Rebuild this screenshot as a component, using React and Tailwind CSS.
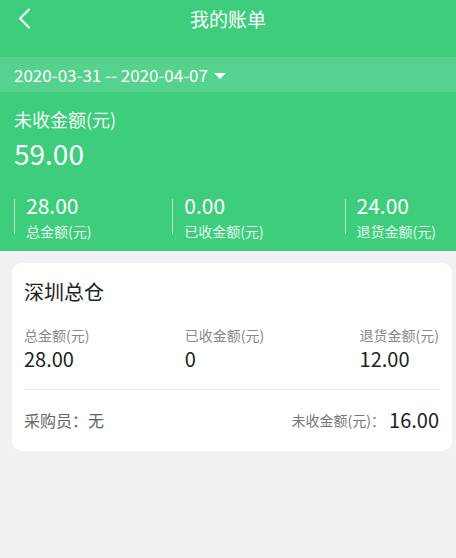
import React from "react";

const font = { fontFamily: '"Noto Sans CJK SC", "Noto Sans", sans-serif' };

// Kopfzeile: Summen im grünen Bereich
function HeadStat({ value, label }) {
  return (
    <div className="flex items-center">
      <div className="w-px h-[35px] bg-white/60" />
      <div className="ml-[11px]">
        <div className="text-[21px] leading-[26px] text-white">{value}</div>
        <div className="mt-[3px] text-[14px] leading-[20px] text-white/85">{label}</div>
      </div>
    </div>
  );
}

// Summen innerhalb der Lagerkarte
function CardStat({ label, value, right }) {
  return (
    <div className={right ? "text-left" : ""}>
      <div className="text-[14px] leading-[20px] text-[#888]">{label}</div>
      <div className="mt-px text-[20px] leading-[26px] text-[#222]">{value}</div>
    </div>
  );
}

export default function App() {
  const card = {
    name: "深圳总仓",
    total: "28.00",
    received: "0",
    returned: "12.00",
    buyer: "无",
    open: "16.00",
  };

  return (
    <div className="w-[456px] h-[558px] bg-[#f0f0f5] overflow-hidden" style={font}>
      {/* Grüner Kopfbereich */}
      <div className="bg-[#3ecd7c] pb-[10px]">
        <div className="relative h-[38px] flex items-center justify-center">
          <svg
            className="absolute left-[17px] top-[8px]"
            width="16"
            height="21"
            viewBox="0 0 16 21"
            fill="none"
          >
            <polyline points="12,1.5 3,10.5 12,19.5" stroke="white" strokeWidth="2" strokeLinecap="round" strokeLinejoin="round" />
          </svg>
          <span className="text-[19px] text-white">我的账单</span>
        </div>

        <div className="mt-[19px] h-[35px] bg-[#55d28e] flex items-center px-[14px]">
          <span className="text-[17px] text-white">2020-03-31 -- 2020-04-07</span>
          <svg className="ml-[6px] mt-[3px]" width="12" height="6" viewBox="0 0 12 6">
            <polygon points="0,0 12,0 6,6" fill="white" />
          </svg>
        </div>

        <div className="pt-[14px] pl-[14px] pr-[20px]">
          <div className="text-[18px] leading-[27px] text-white/95">未收金额(元)</div>
          <div className="mt-[3px] text-[28px] leading-[35px] text-white">59.00</div>
          <div className="mt-[21px] flex justify-between">
            <HeadStat value="28.00" label="总金额(元)" />
            <HeadStat value="0.00" label="已收金额(元)" />
            <HeadStat value="24.00" label="退货金额(元)" />
          </div>
        </div>
      </div>

      {/* Lagerkarte */}
      <div className="mt-[12px] ml-[12px] w-[440px] bg-white rounded-[10px] px-[12px] pt-[15px] pb-[17px]">
        <div className="text-[20px] leading-[28px] text-[#222]">{card.name}</div>
        <div className="mt-[19px] flex justify-between pr-px">
          <CardStat label="总金额(元)" value={card.total} />
          <CardStat label="已收金额(元)" value={card.received} />
          <CardStat label="退货金额(元)" value={card.returned} right />
        </div>
        <div className="mt-[17px] h-px bg-[#e3e8ec]" />
        <div className="mt-[16px] h-[28px] flex items-center justify-between pr-px">
          <span className="text-[16px] text-[#666]">采购员：{card.buyer}</span>
          <div className="flex items-center">
            <span className="text-[14px] text-[#777]">未收金额(元)：</span>
            <span className="ml-[4px] text-[20px] text-[#222]">{card.open}</span>
          </div>
        </div>
      </div>
    </div>
  );
}
